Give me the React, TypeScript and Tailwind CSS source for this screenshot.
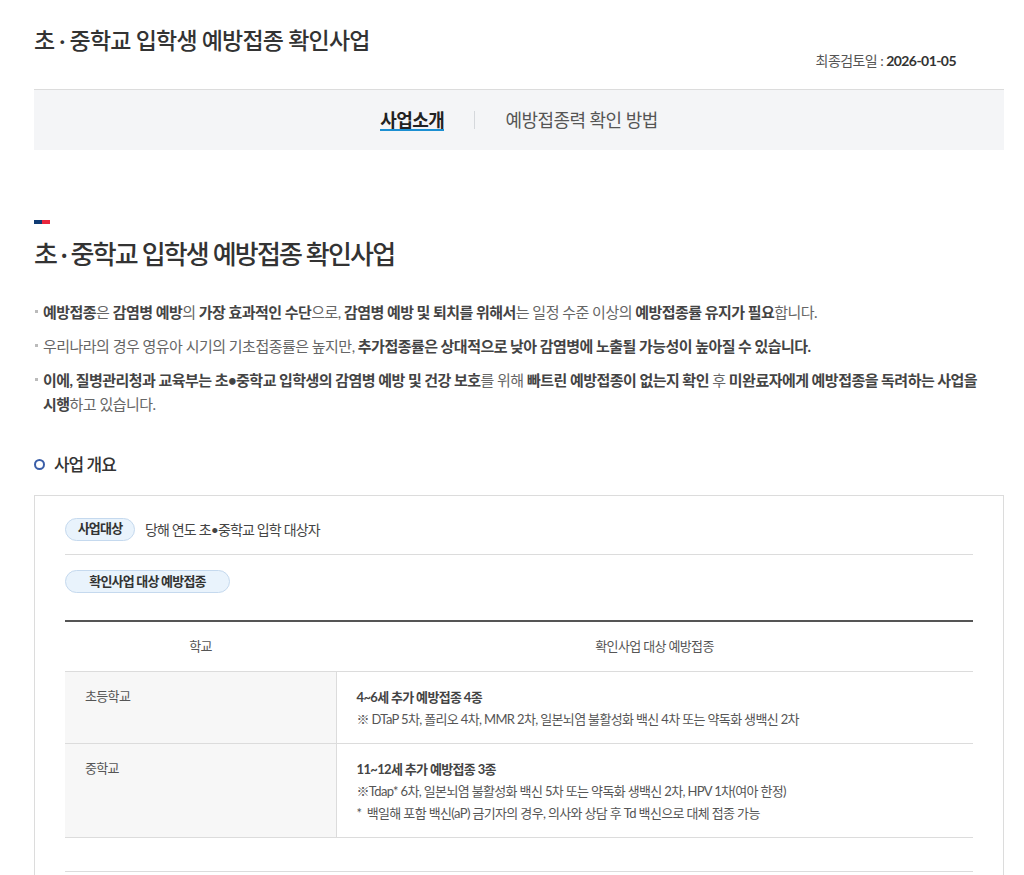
import React from 'react';

const font = { fontFamily: 'Lato, "Noto Sans CJK KR", sans-serif' };

function Bullet({ children }: { children: React.ReactNode }) {
  return (
    <li className="relative pl-[9px] text-[15px] leading-[24px] text-[#666] tracking-[-0.035em] break-keep">
      <span className="absolute left-[1px] top-[10px] h-[3px] w-[3px] bg-[#bbb]" />
      {children}
    </li>
  );
}

const B = ({ children }: { children: React.ReactNode }) => (
  <b className="font-bold text-[#444]">{children}</b>
);

function Pill({ children, wide }: { children: React.ReactNode; wide?: boolean }) {
  return (
    <span
      className={
        'inline-flex h-[23px] items-center justify-center rounded-full border border-[#c5d9ee] bg-[#e9f3fc] text-[13px] font-bold tracking-[-0.06em] text-[#333] ' +
        (wide ? 'w-[165px]' : 'w-[70px]')
      }
    >
      {children}
    </span>
  );
}

export default function App() {
  return (
    <div style={font} className="min-h-[875px] bg-white">
      <div className="w-[970px] ml-[34px]">
        {/* page header */}
        <h1 className="pt-[24px] text-[23px] font-medium leading-[32px] tracking-[-0.035em] text-[#333]">
          초 · 중학교 입학생 예방접종 확인사업
        </h1>
        <div className="flex justify-end pr-[48px] h-[33px] -mt-[6px] pb-[6px] text-[14px] tracking-[-0.04em] text-[#555]">
          <span>
            최종검토일 : <b className="font-bold text-[#333]">2026-01-05</b>
          </span>
        </div>

        {/* tabs */}
        <div className="mt-[6px] flex h-[61px] items-center justify-center border-t border-[#dcdcdc] bg-[#f4f5f7] text-[18px] leading-[20px] tracking-[-0.03em]">
          <span className="relative font-bold text-[#222]">
            사업소개
            <span className="absolute left-0 right-0 bottom-[-1px] h-[2px] bg-[#1b8fd2]" />
          </span>
          <span className="mx-[30px] h-[18px] w-px bg-[#d5d8dc]" />
          <span className="text-[#555]">예방접종력 확인 방법</span>
        </div>

        {/* section title */}
        <div className="mt-[70px] flex h-[4px] w-[16px]">
          <span className="w-1/2 bg-[#0f3b73]" />
          <span className="w-1/2 bg-[#e8263d]" />
        </div>
        <h2 className="mt-[12px] text-[26px] font-medium leading-[36px] tracking-[-0.07em] text-[#333]">
          초 · 중학교 입학생 예방접종 확인사업
        </h2>

        <ul className="mt-[28px] flex flex-col gap-[10px]">
          <Bullet>
            <B>예방접종</B>은 <B>감염병 예방</B>의 <B>가장 효과적인 수단</B>으로, <B>감염병 예방 및 퇴치를 위해서</B>는 일정 수준 이상의{' '}
            <B>예방접종률 유지가 필요</B>합니다.
          </Bullet>
          <Bullet>
            우리나라의 경우 영유아 시기의 기초접종률은 높지만, <B>추가접종률은 상대적으로 낮아 감염병에 노출될 가능성이 높아질 수 있습니다.</B>
          </Bullet>
          <Bullet>
            <B>이에, 질병관리청과 교육부는 초•중학교 입학생의 감염병 예방 및 건강 보호</B>를 위해 <B>빠트린 예방접종이 없는지 확인</B> 후{' '}
            <B>미완료자에게 예방접종을 독려하는 사업을 시행</B>하고 있습니다.
          </Bullet>
        </ul>

        {/* overview */}
        <div className="mt-[36px] flex items-center gap-[9px]">
          <span className="h-[11px] w-[11px] rounded-full border-[2px] border-[#3a5ea8]" />
          <h3 className="text-[17px] font-medium tracking-[-0.06em] text-[#333]">사업 개요</h3>
        </div>

        <div className="mt-[17px] border border-[#dcdcdc] px-[30px] pt-[22px] pb-[40px]">
          <div className="flex items-center gap-[10px] pb-[13px] border-b border-[#dcdcdc]">
            <Pill>사업대상</Pill>
            <span className="text-[14px] tracking-[-0.06em] text-[#444]">당해 연도 초•중학교 입학 대상자</span>
          </div>
          <div className="pt-[13px]">
            <Pill wide>확인사업 대상 예방접종</Pill>
          </div>

          <table className="mt-[27px] w-full border-collapse border-t-[2px] border-[#555] text-[13px] tracking-[-0.05em]">
            <thead>
              <tr className="h-[51px] border-b border-[#dcdcdc] text-[#555]">
                <th className="w-[271px] font-normal">학교</th>
                <th className="font-normal">확인사업 대상 예방접종</th>
              </tr>
            </thead>
            <tbody className="text-[#555]">
              <tr className="border-b border-[#dcdcdc] align-top">
                <td className="bg-[#f7f7f7] px-[20px] pt-[15px]">초등학교</td>
                <td className="border-l border-[#dcdcdc] px-[20px] pt-[14px] pb-[13px] leading-[22px]">
                  <div className="font-bold text-[#444]">4~6세 추가 예방접종 4종</div>
                  <div>※ DTaP 5차, 폴리오 4차, MMR 2차, 일본뇌염 불활성화 백신 4차 또는 약독화 생백신 2차</div>
                </td>
              </tr>
              <tr className="border-b border-[#dcdcdc] align-top">
                <td className="bg-[#f7f7f7] px-[20px] pt-[15px]">중학교</td>
                <td className="border-l border-[#dcdcdc] px-[20px] pt-[14px] pb-[13px] leading-[22px]">
                  <div className="font-bold text-[#444]">11~12세 추가 예방접종 3종</div>
                  <div>※Tdap* 6차, 일본뇌염 불활성화 백신 5차 또는 약독화 생백신 2차, HPV 1차(여아 한정)</div>
                  <div>*&nbsp; 백일해 포함 백신(aP) 금기자의 경우, 의사와 상담 후 Td 백신으로 대체 접종 가능</div>
                </td>
              </tr>
            </tbody>
          </table>
          <div className="mt-[33px] border-b border-[#dcdcdc]" />
          <div className="h-[60px]" />
        </div>
      </div>
    </div>
  );
}
